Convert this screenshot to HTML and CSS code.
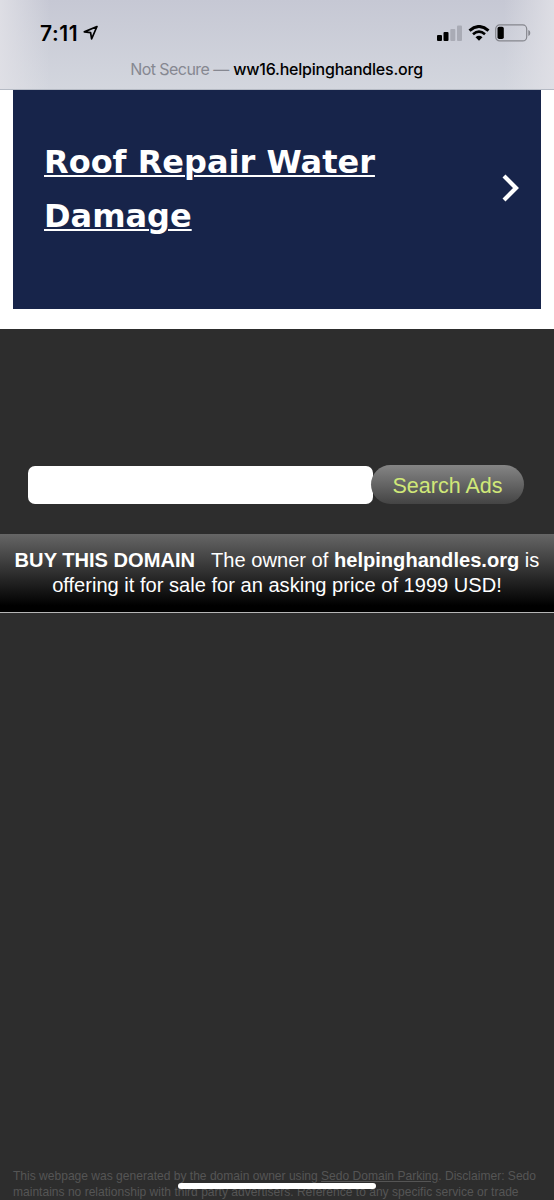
FILE: index.html
```
<!DOCTYPE html>
<html lang="en">
<head>
<meta charset="UTF-8" />
<meta name="viewport" content="width=device-width, initial-scale=1" />
<title>helpinghandles.org</title>
<link rel="stylesheet" href="styles.css">
</head>
<body>

<header class="browserBar">
  <div class="statusRow">
    <div class="clock">
      <span>7:11</span>
      <svg class="locationIcon" width="16" height="16" viewBox="0 0 16 16">
        <path d="M14 1.5 L1.3 6.9 L7.6 7.6 L8.6 13.8 Z" fill="none" stroke="#000" stroke-width="1.7" stroke-linejoin="round" />
      </svg>
    </div>
    <div class="indicators">
      <svg width="26" height="16" viewBox="0 0 26 16">
        <rect x="0" y="10" width="5" height="6" rx="1" />
        <rect x="6.5" y="7" width="5" height="9" rx="1" />
        <rect x="13.3" y="4" width="5" height="12" rx="1" fill="#a9abb5" />
        <rect x="20" y="0.5" width="5" height="15.5" rx="1" fill="#a9abb5" />
      </svg>
      <svg width="22" height="16" viewBox="0 0 22 16">
        <path d="M1.5 5.6 Q11 -2.6 20.5 5.6" fill="none" stroke="#000" stroke-width="3" />
        <path d="M5 9.2 Q11 4.2 17 9.2" fill="none" stroke="#000" stroke-width="2.7" />
        <path d="M7.5 12.2 Q11 9.3 14.5 12.2 L11 15.8 Z" />
      </svg>
      <svg width="36" height="18" viewBox="0 0 36 18">
        <rect x="0.7" y="0.9" width="31" height="16" rx="4" fill="none" stroke="#85868d" stroke-width="1.2" />
        <rect x="2.5" y="2.8" width="6.3" height="12.2" rx="1.7" />
        <path d="M33.3 6 Q35.3 6.5 35.3 9 Q35.3 11.5 33.3 12 Z" fill="#85868d" />
      </svg>
    </div>
  </div>
  <div class="address"><span class="notSecure">Not Secure —</span> <span class="host">ww16.helpinghandles.org</span></div>
</header>

<section class="ads">
  <div class="adCard">
    <a class="adLink" href="#">Roof Repair Water<br>Damage</a>
    <svg class="chevron" width="18" height="28" viewBox="0 0 18 28">
      <path d="M2 2 L14 14 L2 26" fill="none" stroke="#fff" stroke-width="4.2" />
    </svg>
  </div>
</section>

<form class="searchForm">
  <input class="searchInput" type="text" aria-label="Search" />
  <button class="searchBtn" type="button">Search Ads</button>
</form>

<div class="buyBanner">
  <div class="buyLine"><b class="buyTitle">BUY THIS DOMAIN</b>The owner of <b>helpinghandles.org</b> is</div>
  <div class="offerLine">offering it for sale for an asking price of 1999 USD!</div>
</div>

<footer class="disclaimer">
  This webpage was generated by the domain owner using <a href="#">Sedo Domain Parking</a>. Disclaimer: Sedo<br>
  maintains no relationship with third party advertisers. Reference to any specific service or trade
</footer>

<div class="homeBar"></div>

</body>
</html>
```
FILE: styles.css
```
* { box-sizing: border-box; }

body {
  margin: 0;
  height: 1200px;
  display: flex;
  flex-direction: column;
  overflow: hidden;
  background: #2d2d2d;
  font-family: "Liberation Sans", Arial, sans-serif;
}

/* browser chrome */
.browserBar {
  height: 90px;
  flex: none;
  padding-top: 21px;
  border-bottom: 1px solid #b5bac4;
  background:
    linear-gradient(90deg, rgba(224,224,230,0.9), rgba(224,224,230,0) 9%, rgba(224,224,230,0) 91%, rgba(224,224,230,0.9)),
    linear-gradient(#c6c8d4, #d3d6de);
  font-family: Inter, sans-serif;
}
.statusRow {
  height: 24px;
  padding: 0 23px 0 40px;
  display: flex;
  align-items: center;
  justify-content: space-between;
}
.clock {
  display: flex;
  align-items: center;
  gap: 5px;
  font-size: 21px;
  font-weight: 600;
  letter-spacing: 0.6px;
}
.indicators {
  display: flex;
  align-items: center;
  gap: 5px;
}
.address {
  margin-top: 14px;
  padding-right: 1px;
  text-align: center;
  font-size: 16px;
  line-height: 20px;
  white-space: nowrap;
}
.notSecure {
  color: #868891;
  letter-spacing: -0.55px;
}
.host {
  font-weight: 500;
  letter-spacing: -0.22px;
}

/* ad block */
.ads {
  height: 239px;
  flex: none;
  padding: 0 13px 20px;
  background: #fff;
}
.adCard {
  height: 219px;
  padding: 45px 21px 0 31px;
  display: flex;
  justify-content: space-between;
  background: #17244a;
}
.adLink {
  color: #fff;
  font-family: Verdana, "DejaVu Sans", sans-serif;
  font-size: 32px;
  font-weight: bold;
  line-height: 54px;
  text-decoration-thickness: 2px;
  text-underline-offset: 2px;
}
.chevron { margin-top: 39px; }

/* search */
.searchForm {
  flex: none;
  margin: 136px 0 0 28px;
  height: 39px;
  display: flex;
  align-items: center;
}
.searchInput {
  width: 345px;
  height: 38px;
  border: none;
  border-radius: 7px;
  background: #fff;
}
.searchBtn {
  width: 153px;
  height: 39px;
  margin-left: -2px;
  padding: 4px 0 0;
  border: none;
  border-radius: 20px;
  background: linear-gradient(#858585, #444);
  color: #d0e878;
  font-family: inherit;
  font-size: 21.5px;
}

/* domain offer */
.buyBanner {
  flex: none;
  height: 79px;
  margin-top: 30px;
  padding-top: 14px;
  border-bottom: 1px solid #b5b5b5;
  background: linear-gradient(#666, #000 92%);
  color: #fff;
  font-size: 20.1px;
  line-height: 25px;
  text-align: center;
  white-space: nowrap;
}
.buyTitle { margin-right: 16px; }

.disclaimer {
  flex: none;
  margin: 555px 0 0 13px;
  color: #555;
  font-size: 12.05px;
  line-height: 16px;
  white-space: nowrap;
}
.disclaimer a { color: inherit; }

/* sits over the page */
.homeBar {
  position: absolute;
  left: 178px;
  top: 1183px;
  width: 198px;
  height: 6px;
  border-radius: 3px;
  background: #fff;
}
```
